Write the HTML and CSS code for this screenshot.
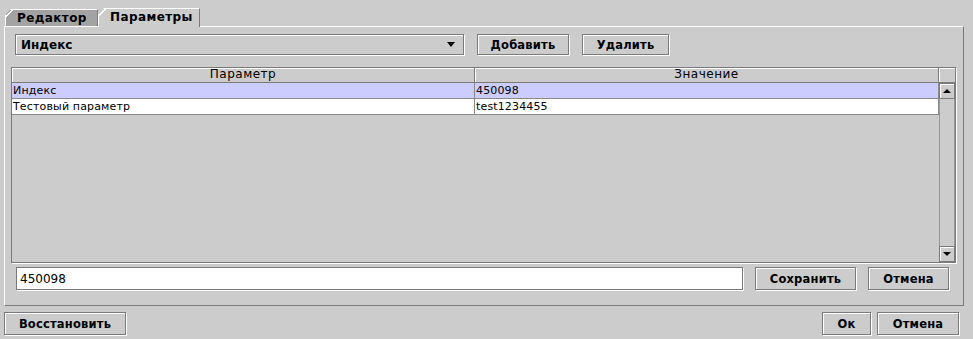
FILE: index.html
```html
<!DOCTYPE html>
<html lang="ru">
<head>
  <meta charset="UTF-8">
  <title>Параметры</title>
  <link rel="stylesheet" href="styles.css">
</head>
<body>
  <div class="window">
    <!-- вкладки -->
    <div class="tabs">
      <div class="tab">Редактор</div>
      <div class="tab active">Параметры</div>
    </div>

    <div class="panel">
      <!-- выбор параметра -->
      <div class="combo-row">
        <div class="combo">
          <span>Индекс</span>
          <span class="combo-arrow"></span>
        </div>
        <button class="btn btn-add">Добавить</button>
        <button class="btn btn-del">Удалить</button>
      </div>

      <!-- таблица параметров -->
      <div class="table">
        <div class="thead">
          <div class="th">Параметр</div>
          <div class="th">Значение</div>
          <div class="th corner"></div>
        </div>
        <div class="tbody">
          <div class="rows">
            <div class="tr selected">
              <div class="td">Индекс</div>
              <div class="td">450098</div>
            </div>
            <div class="tr">
              <div class="td">Тестовый параметр</div>
              <div class="td">test1234455</div>
            </div>
          </div>
          <div class="vscroll">
            <div class="sbtn"><span class="arrow-up"></span></div>
            <div class="track"></div>
            <div class="sbtn"><span class="arrow-down"></span></div>
          </div>
        </div>
      </div>

      <!-- редактирование значения -->
      <div class="edit-row">
        <input class="field" type="text" value="450098">
        <button class="btn btn-save">Сохранить</button>
        <button class="btn btn-cancel">Отмена</button>
      </div>
    </div>

    <!-- нижние кнопки -->
    <div class="footer-row">
      <button class="btn btn-restore">Восстановить</button>
      <div class="spacer"></div>
      <button class="btn btn-ok">Ок</button>
      <button class="btn btn-close">Отмена</button>
    </div>
  </div>
</body>
</html>
```

FILE: styles.css
```css
/* базовые стили */
* {
  box-sizing: border-box;
  font-family: 'DejaVu Sans', sans-serif;
}
body {
  margin: 0;
  padding: 0;
  background: #cccccc;
  color: #000;
  width: 973px;
  height: 339px;
  overflow: hidden;
}
.window {
  padding-top: 8px;
}

/* вкладки */
.tabs {
  display: flex;
  align-items: flex-end;
  padding-left: 5px;
  height: 18px;
  position: relative;
  z-index: 1;
}
.tab {
  height: 17px;
  width: 93px;
  padding-left: 11px;
  font-size: 12px;
  font-weight: bold;
  letter-spacing: 0.4px;
  line-height: 16px;
  background: linear-gradient(135deg, transparent 4.2px, #fff 4.2px, #fff 5.2px, transparent 5.2px) 0 0 / 8px 8px no-repeat, #a3a3a3;
  border-top: 1px solid #fff;
  border-left: 1px solid #fff;
  border-right: 1px solid #7a7a7a;
  clip-path: polygon(6px 0, 100% 0, 100% 100%, 0 100%, 0 6px);
}
.tab.active {
  height: 19px;
  width: 102px;
  padding-left: 11px;
  line-height: 17px;
  background: linear-gradient(135deg, transparent 4.2px, #fff 4.2px, #fff 5.2px, transparent 5.2px) 0 0 / 8px 8px no-repeat, #cccccc;
  margin-bottom: -1px;
}

/* панель вкладки */
.panel {
  margin-left: 4px;
  width: 960px;
  height: 280px;
  border: 1px solid;
  border-color: #fff #7a7a7a #7a7a7a #fff;
  padding-bottom: 13px;
}

/* кнопки */
.btn {
  height: 23px;
  padding: 0;
  background: #cccccc;
  border: 1px solid #7a7a7a;
  box-shadow: inset 1px 1px 0 #fff, 1px 1px 0 #fff;
  font-size: 11.5px;
  font-weight: bold;
  letter-spacing: 0.2px;
  color: #000;
  text-align: center;
  cursor: pointer;
}

.combo-row {
  display: flex;
  margin: 7px 0 0 10px;
  height: 22px;
}
.combo {
  width: 449px;
  height: 21px;
  border: 1px solid #7a7a7a;
  box-shadow: inset 1px 1px 0 #fff, 1px 1px 0 #fff;
  display: flex;
  align-items: center;
  justify-content: space-between;
  padding: 0 5px 0 5px;
  font-size: 12px;
  font-weight: bold;
}
.combo-arrow {
  width: 0;
  height: 0;
  border-left: 4px solid transparent;
  border-right: 4px solid transparent;
  border-top: 5px solid #000;
  margin-right: 3px;
}
.combo-row .btn {
  height: 21px;
}
.btn-add {
  width: 92px;
  margin-left: 13px;
}
.btn-del {
  width: 87px;
  margin-left: 13px;
}

/* таблица */
.table {
  margin: 11px 0 0 6px;
  width: 945px;
  height: 196px;
  border: 1px solid #7a7a7a;
  box-shadow: 1px 1px 0 #fff;
  display: flex;
  flex-direction: column;
  font-size: 11px;
}
.thead {
  display: grid;
  grid-template-columns: 463px 464px 16px;
  height: 15px;
}
.th {
  text-align: center;
  font-size: 12px;
  letter-spacing: 0.5px;
  line-height: 13px;
  border-right: 1px solid #7a7a7a;
  border-bottom: 1px solid #7a7a7a;
  box-shadow: inset 1px 1px 0 #fff;
}
.th.corner {
  border-right: none;
}
.tbody {
  flex: 1;
  display: flex;
}
.rows {
  flex: 1;
}
.tr {
  display: grid;
  grid-template-columns: 463px 464px;
  height: 16px;
  background: #fff;
}
.tr.selected {
  background: #ccccff;
}
.td {
  padding-left: 1px;
  letter-spacing: 0.15px;
  line-height: 15px;
  border-right: 1px solid #8a8a8a;
  border-bottom: 1px solid #8a8a8a;
  white-space: nowrap;
}

/* полоса прокрутки */
.vscroll {
  width: 16px;
  display: flex;
  flex-direction: column;
}
.track {
  flex: 1;
  border-left: 1px solid #999;
  border-right: 1px solid #999;
}
.sbtn {
  height: 16px;
  border: 1px solid #7a7a7a;
  box-shadow: inset 1px 1px 0 #fff;
  display: flex;
  align-items: center;
  justify-content: center;
}
.arrow-up, .arrow-down {
  width: 0;
  height: 0;
  border-left: 4px solid transparent;
  border-right: 4px solid transparent;
}
.arrow-up {
  border-bottom: 4px solid #000;
}
.arrow-down {
  border-top: 4px solid #000;
}

/* поле редактирования */
.edit-row {
  display: flex;
  margin: 4px 0 0 11px;
  height: 24px;
}
.field {
  width: 727px;
  height: 23px;
  margin: 0;
  border: 1px solid #7a7a7a;
  box-shadow: 1px 1px 0 #fff;
  background: #fff;
  padding: 0 3px;
  font-size: 12px;
  color: #000;
  outline: none;
}
.btn-save {
  width: 101px;
  margin-left: 12px;
}
.btn-cancel {
  width: 81px;
  margin-left: 12px;
}

/* нижняя строка */
.footer-row {
  display: flex;
  margin: 6px 14px 0 4px;
  height: 24px;
}
.spacer {
  flex: 1;
}
.btn-restore {
  width: 122px;
}
.btn-ok {
  width: 49px;
}
.btn-close {
  width: 82px;
  margin-left: 6px;
}
```
